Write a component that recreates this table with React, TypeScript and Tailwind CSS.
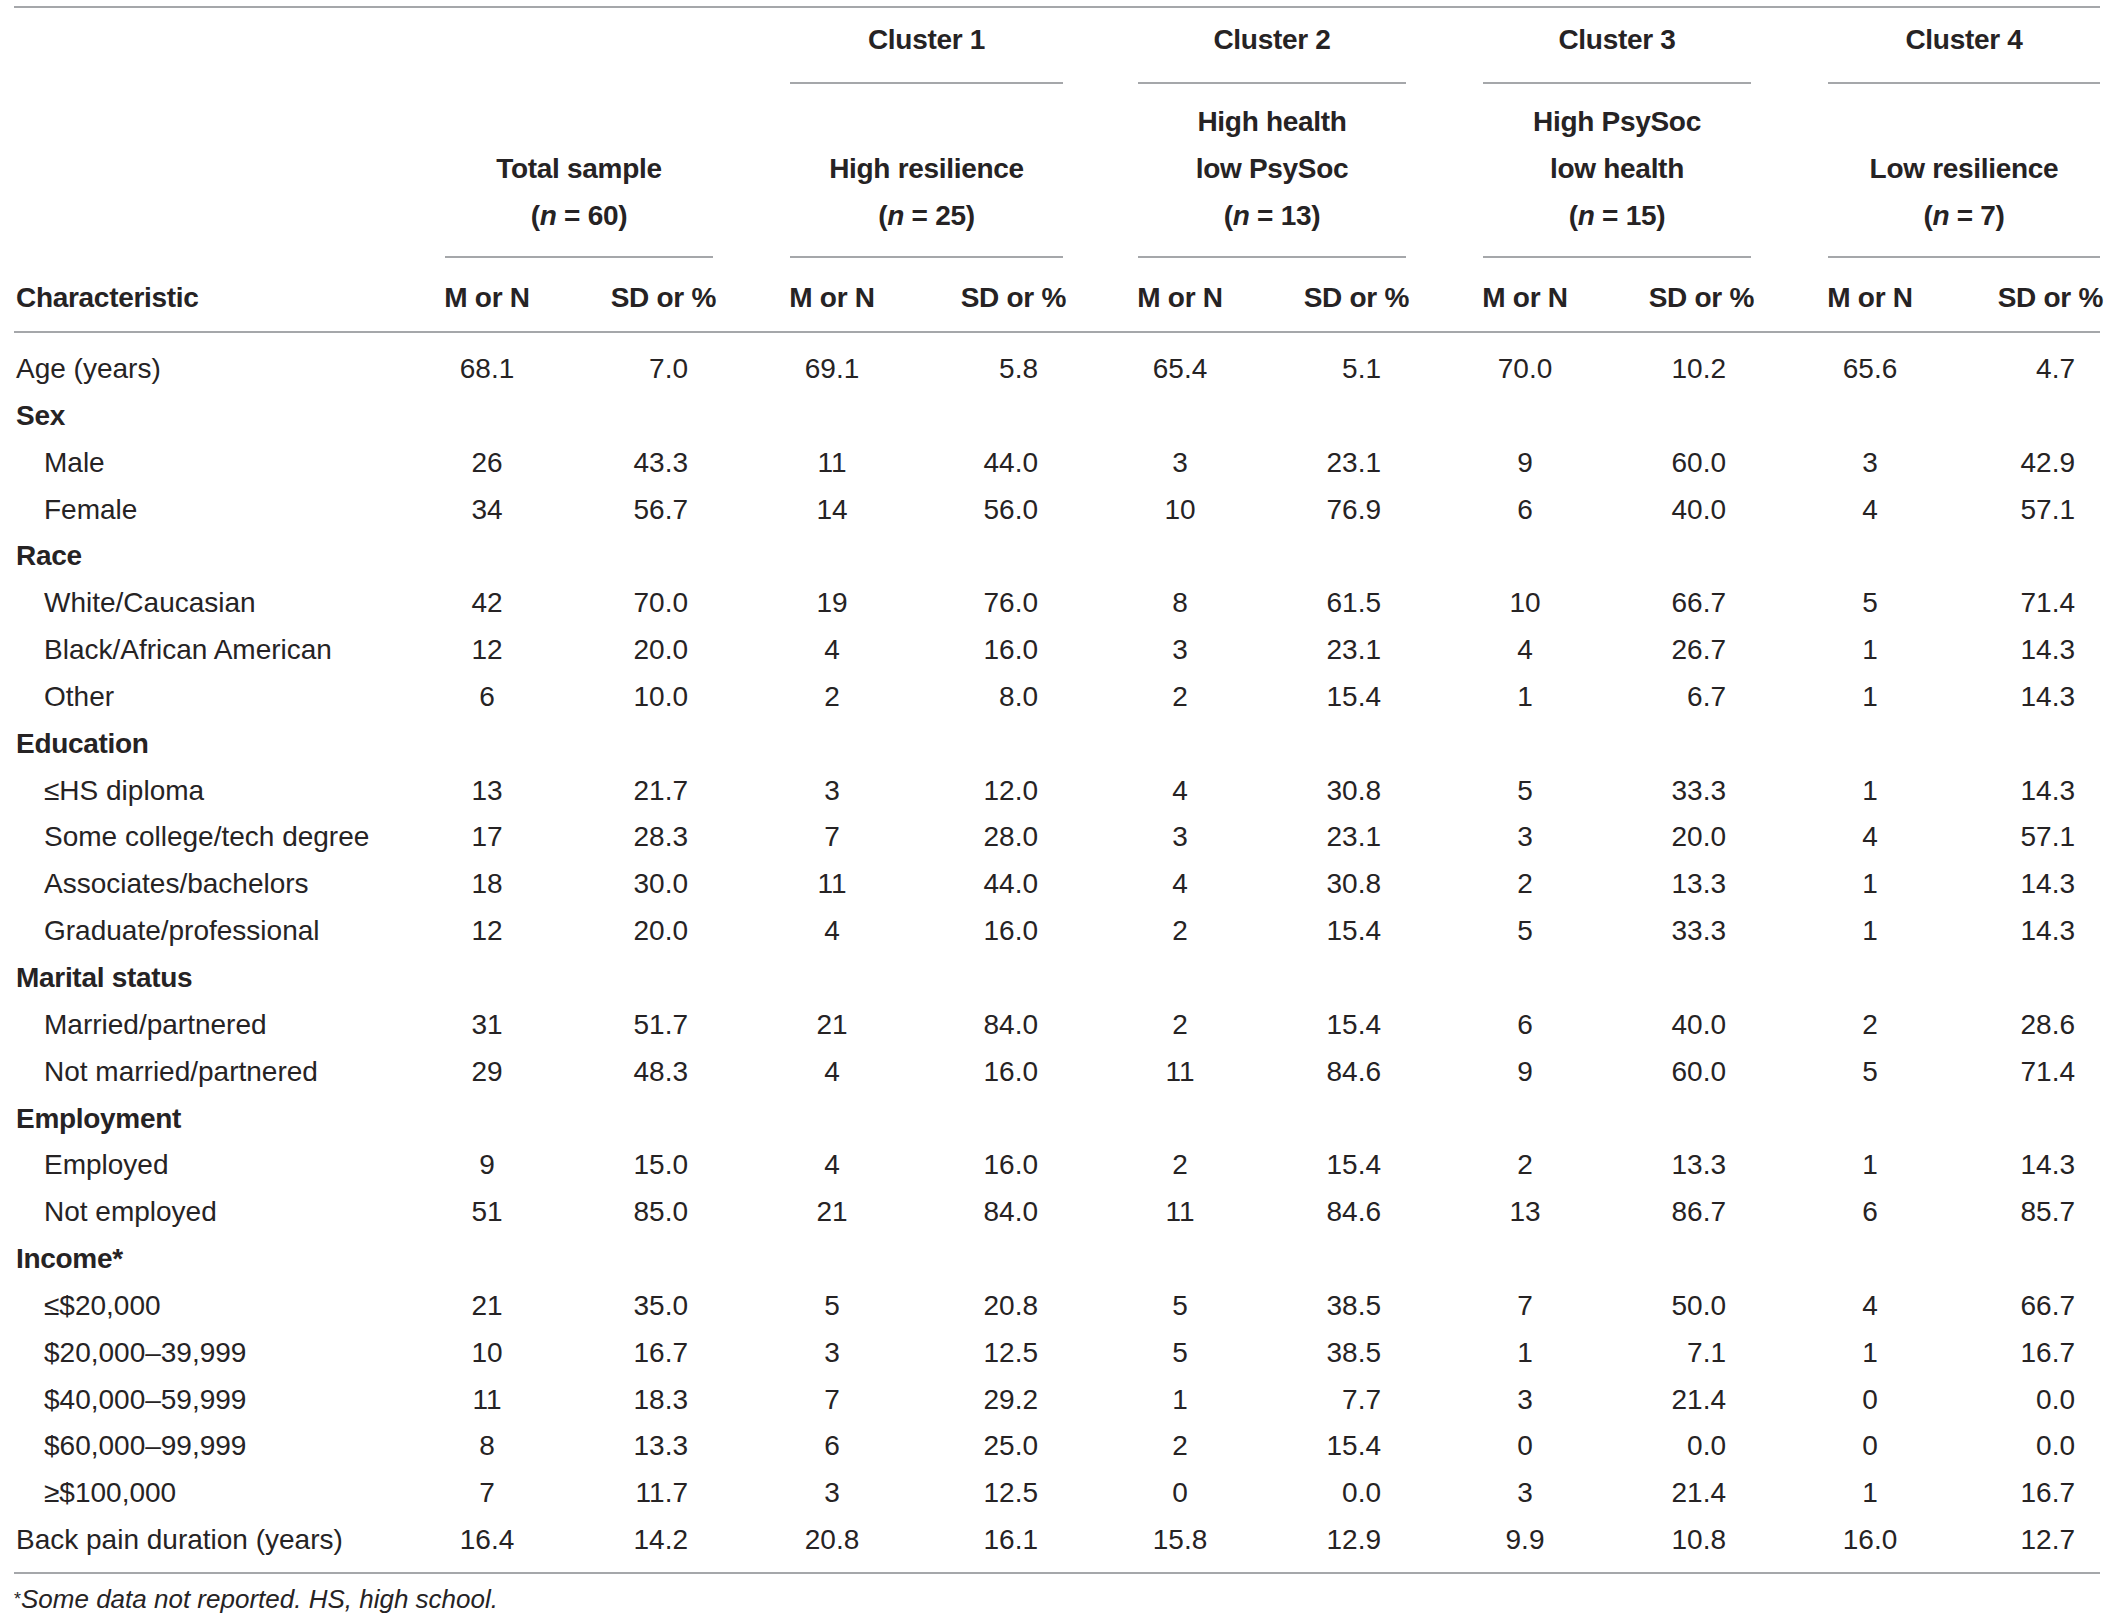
import React from 'react';

type Row = {
  label: string;
  kind: 'plain' | 'section' | 'item';
  values?: string[];
};

const rows: Row[] = [
  { label: 'Age (years)', kind: 'plain', values: ['68.1', '7.0', '69.1', '5.8', '65.4', '5.1', '70.0', '10.2', '65.6', '4.7'] },
  { label: 'Sex', kind: 'section' },
  { label: 'Male', kind: 'item', values: ['26', '43.3', '11', '44.0', '3', '23.1', '9', '60.0', '3', '42.9'] },
  { label: 'Female', kind: 'item', values: ['34', '56.7', '14', '56.0', '10', '76.9', '6', '40.0', '4', '57.1'] },
  { label: 'Race', kind: 'section' },
  { label: 'White/Caucasian', kind: 'item', values: ['42', '70.0', '19', '76.0', '8', '61.5', '10', '66.7', '5', '71.4'] },
  { label: 'Black/African American', kind: 'item', values: ['12', '20.0', '4', '16.0', '3', '23.1', '4', '26.7', '1', '14.3'] },
  { label: 'Other', kind: 'item', values: ['6', '10.0', '2', '8.0', '2', '15.4', '1', '6.7', '1', '14.3'] },
  { label: 'Education', kind: 'section' },
  { label: '≤HS diploma', kind: 'item', values: ['13', '21.7', '3', '12.0', '4', '30.8', '5', '33.3', '1', '14.3'] },
  { label: 'Some college/tech degree', kind: 'item', values: ['17', '28.3', '7', '28.0', '3', '23.1', '3', '20.0', '4', '57.1'] },
  { label: 'Associates/bachelors', kind: 'item', values: ['18', '30.0', '11', '44.0', '4', '30.8', '2', '13.3', '1', '14.3'] },
  { label: 'Graduate/professional', kind: 'item', values: ['12', '20.0', '4', '16.0', '2', '15.4', '5', '33.3', '1', '14.3'] },
  { label: 'Marital status', kind: 'section' },
  { label: 'Married/partnered', kind: 'item', values: ['31', '51.7', '21', '84.0', '2', '15.4', '6', '40.0', '2', '28.6'] },
  { label: 'Not married/partnered', kind: 'item', values: ['29', '48.3', '4', '16.0', '11', '84.6', '9', '60.0', '5', '71.4'] },
  { label: 'Employment', kind: 'section' },
  { label: 'Employed', kind: 'item', values: ['9', '15.0', '4', '16.0', '2', '15.4', '2', '13.3', '1', '14.3'] },
  { label: 'Not employed', kind: 'item', values: ['51', '85.0', '21', '84.0', '11', '84.6', '13', '86.7', '6', '85.7'] },
  { label: 'Income*', kind: 'section' },
  { label: '≤$20,000', kind: 'item', values: ['21', '35.0', '5', '20.8', '5', '38.5', '7', '50.0', '4', '66.7'] },
  { label: '$20,000–39,999', kind: 'item', values: ['10', '16.7', '3', '12.5', '5', '38.5', '1', '7.1', '1', '16.7'] },
  { label: '$40,000–59,999', kind: 'item', values: ['11', '18.3', '7', '29.2', '1', '7.7', '3', '21.4', '0', '0.0'] },
  { label: '$60,000–99,999', kind: 'item', values: ['8', '13.3', '6', '25.0', '2', '15.4', '0', '0.0', '0', '0.0'] },
  { label: '≥$100,000', kind: 'item', values: ['7', '11.7', '3', '12.5', '0', '0.0', '3', '21.4', '1', '16.7'] },
  { label: 'Back pain duration (years)', kind: 'plain', values: ['16.4', '14.2', '20.8', '16.1', '15.8', '12.9', '9.9', '10.8', '16.0', '12.7'] },
];

const groups = [
  { cluster: '', lines: ['', 'Total sample'], n: '60' },
  { cluster: 'Cluster 1', lines: ['', 'High resilience'], n: '25' },
  { cluster: 'Cluster 2', lines: ['High health', 'low PsySoc'], n: '13' },
  { cluster: 'Cluster 3', lines: ['High PsySoc', 'low health'], n: '15' },
  { cluster: 'Cluster 4', lines: ['', 'Low resilience'], n: '7' },
];

// label col, then five groups with gaps between them
const cols = 'grid grid-cols-[431px_268px_77px_273px_75px_268px_77px_268px_77px_1fr]';

const Rule = () => <div className="h-[2px] bg-[#a5a7aa]" />;

const GroupCells = ({ render }: { render: (g: number) => React.ReactNode }) => (
  <>
    {[0, 1, 2, 3, 4].map((g) => (
      <React.Fragment key={g}>
        <div>{render(g)}</div>
        {g < 4 && <div />}
      </React.Fragment>
    ))}
  </>
);

export default function App() {
  return (
    <div className="min-h-screen bg-white pt-[6px] text-[#262324] font-['Liberation_Sans',Arial,sans-serif]">
      <div className="ml-[14px] w-[2086px]">
        <Rule />

        {/* cluster labels */}
        <div className={cols}>
          <div />
          <GroupCells
            render={(g) => (
              <div className="flex flex-col">
                <div className="flex h-[64px] items-center justify-center text-[28px] font-bold tracking-[-0.3px]">
                  {groups[g].cluster}
                </div>
                <div className={`mt-[10px] h-[2px] ${g > 0 ? 'bg-[#a5a7aa]' : ''}`} />
              </div>
            )}
          />
        </div>

        {/* cluster descriptions */}
        <div className={`${cols} pt-[14px] pb-[17px]`}>
          <div />
          <GroupCells
            render={(g) => (
              <div className="flex flex-col items-center text-[28px] font-bold leading-[47px] tracking-[-0.3px]">
                <div className="h-[47px]">{groups[g].lines[0]}</div>
                <div className="h-[47px]">{groups[g].lines[1]}</div>
                <div className="h-[47px]">
                  (<span className="italic">n</span> = {groups[g].n})
                </div>
              </div>
            )}
          />
        </div>

        <div className={cols}>
          <div />
          <GroupCells render={() => <div className="h-[2px] bg-[#a5a7aa]" />} />
        </div>

        {/* column headings */}
        <div className={`${cols} pt-[16px] pb-[10px] text-[28px] font-bold leading-[47px] tracking-[-0.3px]`}>
          <div className="pl-[2px]">Characteristic</div>
          <GroupCells
            render={() => (
              <div className="flex">
                <div className="-ml-[2px] w-[88px] whitespace-nowrap text-center">M or N</div>
                <div className="-mr-[3px] flex-1 whitespace-nowrap text-right">SD or %</div>
              </div>
            )}
          />
        </div>

        <Rule />

        {/* body */}
        <div className="pt-[13px] pb-[8px] text-[28px] leading-[46.85px]">
          {rows.map((r) => (
            <div key={r.label} className={`${cols} h-[46.85px]`}>
              <div
                className={
                  r.kind === 'section'
                    ? 'pl-[2px] font-bold tracking-[-0.3px]'
                    : r.kind === 'item'
                      ? 'pl-[30px] whitespace-nowrap'
                      : 'pl-[2px] whitespace-nowrap'
                }
              >
                {r.label}
              </div>
              {r.values && (
                <GroupCells
                  render={(g) => (
                    <div className="flex">
                      <div className="-ml-[2px] w-[88px] text-center">{r.values![g * 2]}</div>
                      <div className="flex-1 pr-[25px] text-right">{r.values![g * 2 + 1]}</div>
                    </div>
                  )}
                />
              )}
            </div>
          ))}
        </div>

        <Rule />

        <p className="pt-[10px] text-[26px] italic leading-[30px]">
          <span className="align-top text-[18px] not-italic">*</span>Some data not reported. HS, high school.
        </p>
      </div>
    </div>
  );
}
